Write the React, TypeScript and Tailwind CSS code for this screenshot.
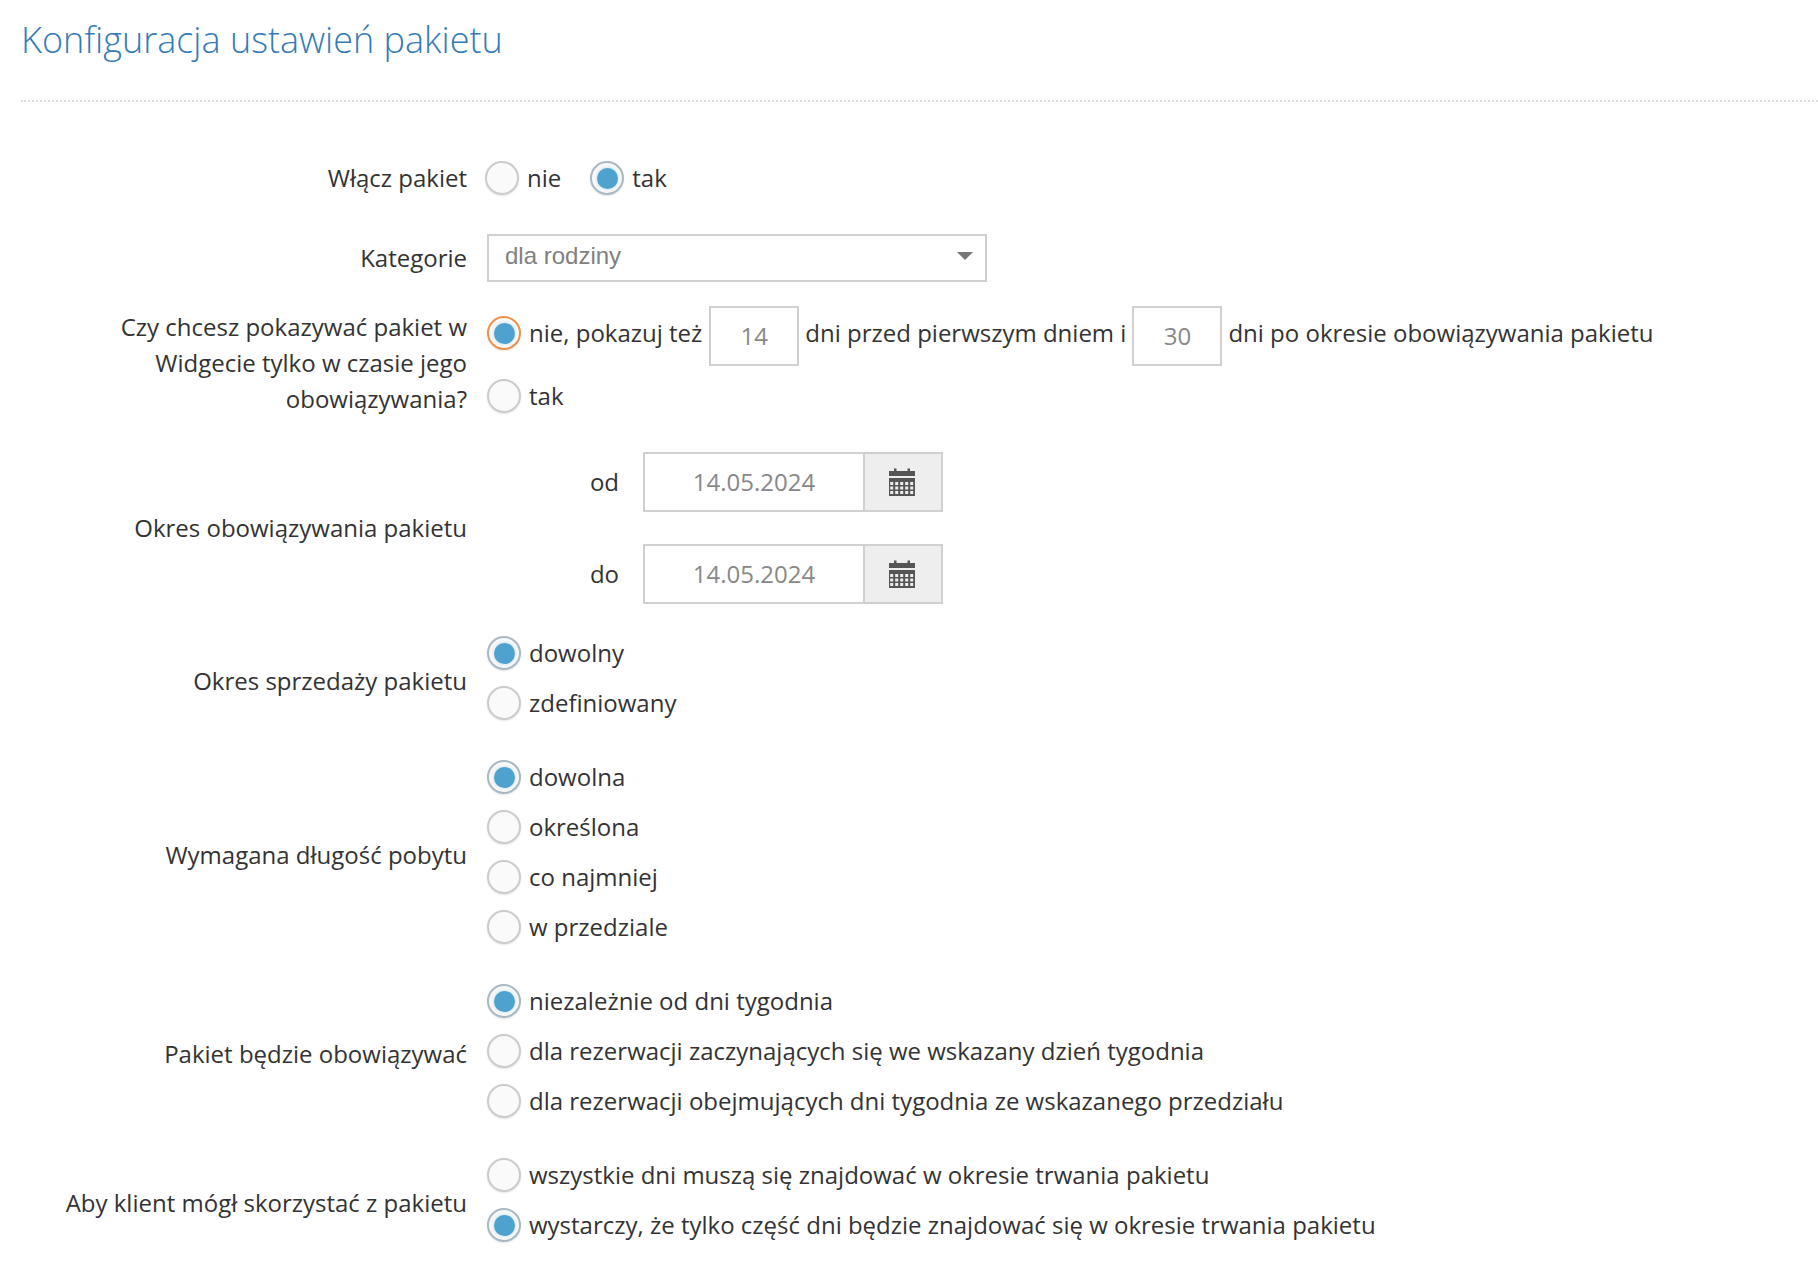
const sans = "font-['Open_Sans',sans-serif]";

function Radio({ checked = false, focus = false }: { checked?: boolean; focus?: boolean }) {
  return (
    <span
      className={
        "flex h-[34px] w-[34px] shrink-0 items-center justify-center rounded-full border-2 bg-[#fafafa] shadow-[0_1px_2px_rgba(0,0,0,0.1)] " +
        (focus ? "border-[#f0904a]" : checked ? "border-[#aab8c4]" : "border-[#cccccc]")
      }
    >
      {checked && <span className="h-[21px] w-[21px] rounded-full bg-[#4ea2cd] shadow-[0_0_4px_rgba(79,163,209,0.35)]" />}
    </span>
  );
}

function Option({ label, checked = false }: { label: string; checked?: boolean }) {
  return (
    <div className="flex h-[34px] items-center gap-[8px]">
      <Radio checked={checked} />
      <span>{label}</span>
    </div>
  );
}

function Calendar() {
  const cells = [];
  for (let r = 0; r < 3; r++) {
    for (let c = 0; c < 5; c++) {
      cells.push(<rect key={r + "-" + c} x={1.2 + c * 5} y={14 + r * 4.5} width="3" height="3" fill="#eeeeee" />);
    }
  }
  return (
    <svg width="26" height="28" viewBox="0 0 26 28">
      <path d="M0 3h5V0.5h2.5V3h11V0.5H21V3h5v5H0z" fill="#555555" />
      <rect x="0" y="10" width="26" height="18" fill="#555555" />
      {cells}
    </svg>
  );
}

function DateRow({ label }: { label: string }) {
  return (
    <div className="flex items-center">
      <span className="w-[132px] pr-[24px] text-right">{label}</span>
      <div className="flex h-[60px] w-[300px] border-2 border-[#d0d0d0]">
        <div className="flex w-[218px] items-center justify-center text-[#888888]">14.05.2024</div>
        <div className="flex flex-1 items-center justify-center border-l-2 border-[#d0d0d0] bg-[#eeeeee] pr-[3px]">
          <Calendar />
        </div>
      </div>
    </div>
  );
}

function NumBox({ value, cls }: { value: string; cls: string }) {
  return (
    <span className={"flex h-[60px] w-[90px] items-center justify-center border-2 border-[#d0d0d0] text-[#888888] " + cls}>
      {value}
    </span>
  );
}

function Row({
  label,
  children,
  cls = "",
  labelCls = "",
}: {
  label: React.ReactNode;
  children: React.ReactNode;
  cls?: string;
  labelCls?: string;
}) {
  return (
    <div className={"flex " + cls}>
      <div className={"w-[446px] shrink-0 text-right " + labelCls}>{label}</div>
      <div className="ml-[20px]">{children}</div>
    </div>
  );
}

function Stack({ items, checked }: { items: string[]; checked: number }) {
  return (
    <div className="flex flex-col gap-[16px]">
      {items.map((t, i) => (
        <Option key={t} label={t} checked={i === checked} />
      ))}
    </div>
  );
}

export default function App() {
  return (
    <div className={"h-[1262px] overflow-hidden bg-white pl-[21px] text-[24px] leading-[34px] text-[#333333] " + sans}>
      <h1 className="pt-[15px] pb-[35px] text-[36px] leading-[50px] font-light text-[#337ab7]">
        Konfiguracja ustawień pakietu
      </h1>
      <div className="border-t-2 border-dotted border-[#dddddd]" />

      <Row label="Włącz pakiet" cls="mt-[59px] items-center">
        <div className="-ml-[2px] flex items-center gap-[29px]">
          <Option label="nie" />
          <Option label="tak" checked />
        </div>
      </Row>

      <Row label="Kategorie" cls="mt-[39px] items-center">
        <div className="relative flex h-[48px] w-[500px] items-center border-2 border-[#d0d0d0] pl-[16px] font-['Liberation_Sans',sans-serif] text-[24px] text-[#808080]">
          <span className="-mt-[4px]">dla rodziny</span>
          <span className="absolute top-[16px] right-[12px] h-0 w-0 border-x-[8px] border-t-[8px] border-x-transparent border-t-[#777777]" />
        </div>
      </Row>

      <Row
        cls="mt-[24px]"
        labelCls="pt-[3px] leading-[36px]"
        label={
          <>
            Czy chcesz pokazywać pakiet w
            <br />
            Widgecie tylko w czasie jego
            <br />
            obowiązywania?
          </>
        }
      >
        <div className="flex flex-col gap-[13px]">
          <div className="flex items-start">
            <div className="mt-[10px] flex items-center gap-[8px]">
              <Radio checked focus />
              <span>nie, pokazuj też</span>
            </div>
            <NumBox value="14" cls="ml-[7px] mr-[6px]" />
            <span className="mt-[10px]">dni przed pierwszym dniem i</span>
            <NumBox value="30" cls="mx-[6px]" />
            <span className="mt-[10px]">dni po okresie obowiązywania pakietu</span>
          </div>
          <Option label="tak" />
        </div>
      </Row>

      <div className="mt-[35px] flex items-center">
        <div className="w-[446px] shrink-0 text-right">Okres obowiązywania pakietu</div>
        <div className="ml-[44px] flex flex-col gap-[32px]">
          <DateRow label="od" />
          <DateRow label="do" />
        </div>
      </div>

      <Row label="Okres sprzedaży pakietu" cls="mt-[32px] items-center" labelCls="pt-[6px]">
        <Stack items={["dowolny", "zdefiniowany"]} checked={0} />
      </Row>

      <Row label="Wymagana długość pobytu" cls="mt-[40px] items-center" labelCls="pt-[6px]">
        <Stack items={["dowolna", "określona", "co najmniej", "w przedziale"]} checked={0} />
      </Row>

      <Row label="Pakiet będzie obowiązywać" cls="mt-[40px] items-center" labelCls="pt-[6px]">
        <Stack
          items={[
            "niezależnie od dni tygodnia",
            "dla rezerwacji zaczynających się we wskazany dzień tygodnia",
            "dla rezerwacji obejmujących dni tygodnia ze wskazanego przedziału",
          ]}
          checked={0}
        />
      </Row>

      <Row label="Aby klient mógł skorzystać z pakietu" cls="mt-[40px] items-center" labelCls="pt-[6px]">
        <Stack
          items={[
            "wszystkie dni muszą się znajdować w okresie trwania pakietu",
            "wystarczy, że tylko część dni będzie znajdować się w okresie trwania pakietu",
          ]}
          checked={1}
        />
      </Row>
    </div>
  );
}
